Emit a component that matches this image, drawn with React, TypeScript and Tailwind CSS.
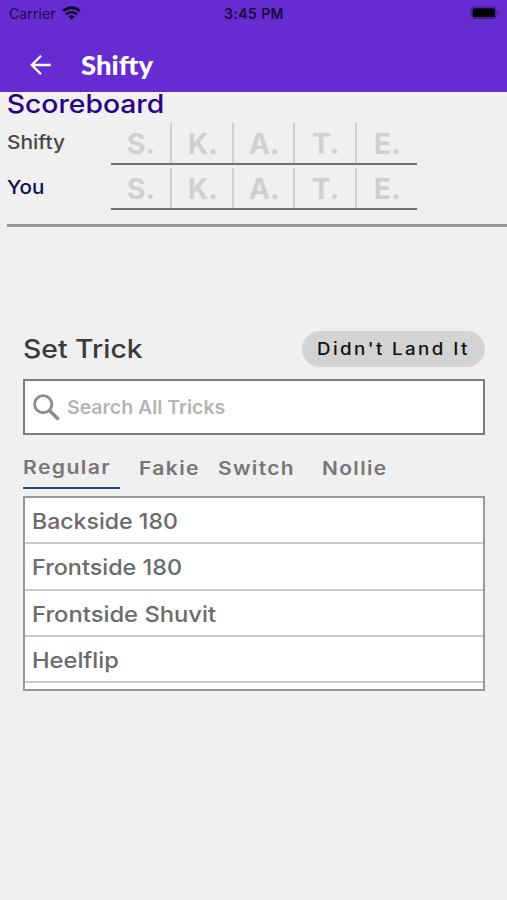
const letters = ['S.', 'K.', 'A.', 'T.', 'E.'];
const tricks = [
  { name: 'Backside 180', stretch: 'scale-x-[1.05]' },
  { name: 'Frontside 180', stretch: 'scale-x-[1.062]' },
  { name: 'Frontside Shuvit', stretch: 'scale-x-[1.08]' },
  { name: 'Heelflip', stretch: 'scale-x-[1.075]' },
];

function StatusBar() {
  return (
    <div className="flex h-7 items-center pl-[9px] pr-[7px] text-[14px] text-[#180a3c]">
      <div className="flex flex-1 items-center gap-[6px]">
        <span className="leading-[26px] tracking-[0.1px]">Carrier</span>
        <svg className="-mt-[2px]" width="19" height="14" viewBox="0 0 19 14" fill="none" stroke="#0b0420">
          <path d="M1.2 5.1a11.8 11.8 0 0 1 16.6 0" strokeWidth="2.7" />
          <path d="M4.1 8.3a7.7 7.7 0 0 1 10.8 0" strokeWidth="2.4" />
          <path d="M9.5 13.6 6.5 10.6a4.3 4.3 0 0 1 6 0z" fill="#0b0420" stroke="none" />
        </svg>
      </div>
      <span className="-mt-[2px] mr-[1px] font-semibold tracking-[0.4px]">3:45 PM</span>
      <div className="flex flex-1 justify-end">
        <svg className="-mt-[2px]" width="31" height="14" viewBox="0 0 31 14">
          <rect x="2" y="1" width="25" height="11.5" rx="3" fill="none" stroke="#3a1684" />
          <rect x="3.5" y="2.3" width="22.5" height="9" rx="1.6" fill="#030008" />
          <path d="M2 9.5v2l2 1.2V11z" fill="#a01445" />
          <path d="M29 4.5q2.5 2.3 0 4.6z" fill="#3a1684" />
        </svg>
      </div>
    </div>
  );
}

function ScoreRow({ name, nameClass, className }: { name: string; nameClass: string; className: string }) {
  return (
    <div className={'flex pl-[7px] ' + className}>
      <div className="w-[104px]">
        <span className={'inline-block origin-left pt-px text-[19px] font-medium leading-[37px] ' + nameClass}>{name}</span>
      </div>
      <div className="flex h-[42px] w-[305.5px] border-b-2 border-[#707070]">
        {letters.map((letter, i) => (
          <div
            key={letter}
            className={
              'pt-px text-center text-[28px] font-bold leading-[40px] text-[#d0d0d0] ' +
              (i < 4 ? 'shrink-0 border-r-2 border-[#d0d0d0] ' + (i === 0 ? 'w-[61px]' : 'w-[61.7px] pl-px') : 'flex-1 pl-[1px]')
            }
          >
            <span className="inline-block scale-x-[1.02]">{letter}</span>
          </div>
        ))}
      </div>
    </div>
  );
}

export default function App() {
  return (
    <div className="h-[900px] w-[507px] overflow-hidden bg-[#f0f0f0] font-['Inter',sans-serif]">
      <header className="h-[92px] bg-[#672bd2]">
        <StatusBar />
        <div className="flex h-[64px] items-center pl-[30px] pt-[10px]">
          <svg width="22" height="22" viewBox="0 0 22 22" fill="none" stroke="#fff" strokeWidth="2.3">
            <path d="M20.8 11H2.2M11 1.8 1.8 11l9.2 9.2" />
          </svg>
          <h1 className="ml-[29px] origin-left scale-x-[1.02] font-['Lato',sans-serif] text-[27px] font-black leading-8 text-white">
            Shifty
          </h1>
        </div>
      </header>

      <section>
        <h2 className="h-[31px] w-fit origin-left scale-x-[1.11] text-[25.5px] font-medium leading-[24px] text-[#2b0089]">
          <span className="pl-[6px]">Scoreboard</span>
        </h2>
        <ScoreRow name="Shifty" nameClass="scale-x-[1.1] text-[#484848]" className="" />
        <ScoreRow name="You" nameClass="scale-x-[1.08] text-[#0a0f4e]" className="mt-[3px]" />
        <div className="ml-[7px] mt-[14.4px] h-[2.4px] bg-[#999]" />
      </section>

      <main className="mt-[104px] pl-[23px] pr-[22px]">
        <div className="flex h-[36px] items-center justify-between">
          <h2 className="origin-left scale-x-[1.11] text-[25.5px] font-medium text-[#3b3b3b]">Set Trick</h2>
          <button className="h-[36px] w-[183px] rounded-full bg-[#d3d3d3] pt-[2px] text-[#111]">
            <span className="inline-block scale-x-[1.1] whitespace-nowrap text-[17px] font-medium tracking-[2.2px]">Didn't Land It</span>
          </button>
        </div>

        <div className="mt-[12px] flex h-[56px] items-center border-2 border-[#7b7b7b] bg-white pl-[8px]">
          <svg className="mt-px" width="27" height="27" viewBox="0 0 27 27" fill="none" stroke="#8e8e8e">
            <circle cx="10.2" cy="10.2" r="8.6" strokeWidth="2.9" />
            <path d="m17 17 8.6 8.6" strokeWidth="3.6" />
          </svg>
          <span className="ml-[7px] origin-left scale-x-[1.025] pt-[2px] text-[19px] font-semibold text-[#b4b4b4]">
            Search All Tricks
          </span>
        </div>

        <nav className="flex h-[54px] text-[18.5px] font-semibold leading-[23px] tracking-[1.2px] text-[#777]">
          <div className="h-[54px] w-[97px] border-b-2 border-[#35477e] pt-[21px]">
            <span className="inline-block origin-left scale-x-[1.145]">Regular</span>
          </div>
          <div className="ml-[19px] w-[79px] pt-[22px]">
            <span className="inline-block origin-left scale-x-[1.14]">Fakie</span>
          </div>
          <div className="w-[104px] pt-[22px]">
            <span className="inline-block origin-left scale-x-[1.13]">Switch</span>
          </div>
          <div className="pt-[22px]">
            <span className="inline-block origin-left scale-x-[1.13]">Nollie</span>
          </div>
        </nav>

        <ul className="mt-[7px] h-[195px] overflow-hidden border-2 border-[#999] bg-white">
          {tricks.map(({ name, stretch }) => (
            <li key={name} className="h-[46.4px] border-b-2 border-[#cbcbcb] pl-[7px]">
              <span className={'inline-block origin-left text-[22px] font-medium leading-[46px] text-[#6b6b6b] ' + stretch}>{name}</span>
            </li>
          ))}
        </ul>
      </main>
    </div>
  );
}
